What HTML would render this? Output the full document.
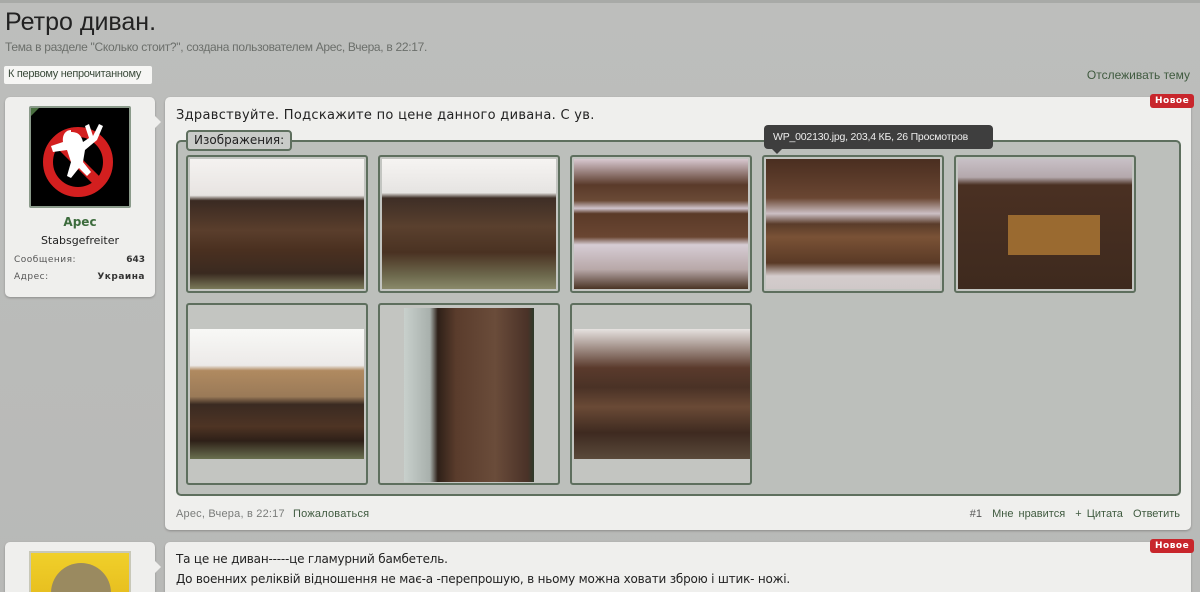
<!DOCTYPE html>
<html><head><meta charset="utf-8">
<style>
*{margin:0;padding:0;box-sizing:border-box}
html,body{width:1200px;height:592px;overflow:hidden}
body{background:linear-gradient(#bdbebc,#b8b9b7);font-family:"DejaVu Sans","Liberation Sans",sans-serif;position:relative}
.a{position:absolute}
h1{position:absolute;left:5px;top:8px;font:400 25px "Liberation Sans",sans-serif;color:#222}
.sub{left:5px;top:40px;font:12px "Liberation Sans",sans-serif;color:#6b6f6b;letter-spacing:-0.3px}
.btn{left:4px;top:66px;width:148px;height:18px;background:#f6f6f4;border-radius:2px;font:11px "Liberation Sans",sans-serif;color:#3a4a3a;padding:2px 4px;letter-spacing:-0.3px}
.watch{right:10px;top:68px;font:12px "Liberation Sans",sans-serif;color:#3f5a3f}
.panel{background:#efefed;border-radius:5px;box-shadow:0 1px 2px rgba(0,0,0,.25)}
.new{background:#c8262c;color:#fff;font:bold 9px "DejaVu Sans",sans-serif;padding:2px 5px;border-radius:3px;letter-spacing:.5px}
.tile{position:absolute;width:182px;height:138px;background:#c3c5c1;border:2px solid #5e6f5e;border-radius:3px;overflow:hidden}
.t2{height:182px}
.ph{position:absolute}
</style></head><body>
<div class="a" style="left:0;top:0;width:1200px;height:3px;background:#a8aaa7"></div>
<h1>Ретро диван.</h1>
<div class="a sub">Тема в разделе "Сколько стоит?", создана пользователем Арес, Вчера, в 22:17.</div>
<div class="a btn">К первому непрочитанному</div>
<div class="a watch">Отслеживать тему</div>

<div class="a panel" style="left:5px;top:97px;width:150px;height:200px"></div>
<div class="a" style="left:152px;top:113px;width:0;height:0;border:9px solid transparent;border-left-color:#efefed"></div>
<div class="a" style="left:29px;top:106px;width:102px;height:102px;background:#000;border:2px solid #8a9a8a;border-radius:2px;overflow:hidden">
<svg width="98" height="98" viewBox="0 0 98 98"><circle cx="47" cy="54" r="30" fill="none" stroke="#d31f1f" stroke-width="10"/><line x1="26" y1="33" x2="68" y2="75" stroke="#d31f1f" stroke-width="10"/><path d="M40 22c-6 0-9 6-8 12l-12 4 2 6 14-2 4 12-4 14 4 2 8-10 8 8 4-4-8-10 2-12 12-10 6-14-4-2-6 12-4-12-4 2 4 12-6 4c-2-8-6-10-12-10z" fill="#fff"/></svg>
<div class="a" style="left:-2px;top:-2px;width:0;height:0;border:6px solid #4a7040;border-right-color:transparent;border-bottom-color:transparent"></div>
</div>
<div class="a" style="left:5px;top:215px;width:150px;text-align:center;font:bold 12px 'DejaVu Sans',sans-serif;color:#3c6b3c">Арес</div>
<div class="a" style="left:5px;top:234px;width:150px;text-align:center;font:11px 'DejaVu Sans',sans-serif;color:#222">Stabsgefreiter</div>
<div class="a" style="left:14px;top:255px;font:9px 'DejaVu Sans',sans-serif;color:#555;letter-spacing:.5px">Сообщения:</div>
<div class="a" style="right:1055px;top:255px;font:bold 9px 'DejaVu Sans',sans-serif;color:#333">643</div>
<div class="a" style="left:14px;top:272px;font:9px 'DejaVu Sans',sans-serif;color:#555;letter-spacing:.5px">Адрес:</div>
<div class="a" style="right:1055px;top:272px;font:bold 9px 'DejaVu Sans',sans-serif;color:#333;letter-spacing:.5px">Украина</div>

<div class="a panel" style="left:165px;top:97px;width:1026px;height:433px"></div>
<div class="a new" style="left:1150px;top:94px">Новое</div>
<div class="a" style="left:176px;top:108px;font:13px 'DejaVu Sans',sans-serif;color:#222;letter-spacing:.3px">Здравствуйте. Подскажите по цене данного дивана. С ув.</div>
<div class="a" style="left:176px;top:140px;width:1005px;height:356px;background:#bcbfbb;border:2px solid #5e6f5e;border-radius:5px"></div>
<div class="a" style="left:186px;top:130px;height:21px;padding:1px 6px;background:#c9cbc8;border:2px solid #5e6f5e;border-radius:4px;font:12px 'DejaVu Sans',sans-serif;color:#222">Изображения:</div>

<div class="tile" style="left:186px;top:155px"><div class="ph" style="left:2px;top:2px;width:174px;height:130px;background:linear-gradient(#f4f2f0 0,#e8e4e2 28%,#3a2a22 32%,#5a3e2c 55%,#4a3020 70%,#3a2a20 88%,#7a7a5a 100%)"></div></div>
<div class="tile" style="left:378px;top:155px"><div class="ph" style="left:2px;top:2px;width:174px;height:130px;background:linear-gradient(#f6f4f2 0,#e6e4e2 26%,#3e2e26 30%,#5a402e 52%,#4a3222 72%,#6e6a4e 90%,#8a8a6a 100%)"></div></div>
<div class="tile" style="left:570px;top:155px"><div class="ph" style="left:2px;top:2px;width:174px;height:130px;background:linear-gradient(#d8c8d0 0,#5a3a2a 20%,#6a4a36 32%,#d0c4cc 38%,#5a3a28 42%,#6a4632 60%,#d6ccd4 66%,#b8a8a8 85%,#4a3424 100%)"></div></div>
<div class="tile" style="left:762px;top:155px"><div class="ph" style="left:2px;top:2px;width:174px;height:130px;background:linear-gradient(#4a2e20 0,#6a4632 30%,#ccbfc4 42%,#5a3c2a 50%,#7a5236 60%,#5a3a26 80%,#d4cccc 90%,#cfc8c8 100%)"></div></div>
<div class="tile" style="left:954px;top:155px"><div class="ph" style="left:2px;top:2px;width:174px;height:130px;background:linear-gradient(#c8c0c6 0,#b4a8ac 14%,#4a3022 20%,#3e2a1e 100%)"></div><div class="ph" style="left:52px;top:58px;width:92px;height:40px;background:#9a6a30"></div></div>

<div class="tile t2" style="left:186px;top:303px"><div class="ph" style="left:2px;top:24px;width:174px;height:130px;background:linear-gradient(#f8f8f6 0,#eceae8 28%,#b08a60 32%,#9a7a58 52%,#3a2a22 58%,#4e3424 75%,#2e2018 86%,#6a7050 100%)"></div></div>
<div class="tile t2" style="left:378px;top:303px"><div class="ph" style="left:24px;top:3px;width:130px;height:174px;background:linear-gradient(90deg,#c8d0cc 0,#a8b0ac 20%,#2e2018 26%,#5a3c2c 40%,#6a4c3a 70%,#4a3228 95%,#2e3a2a 100%)"></div></div>
<div class="tile t2" style="left:570px;top:303px"><div class="ph" style="left:2px;top:24px;width:176px;height:130px;background:linear-gradient(180deg,#e6e2e0 0,#5a3a2c 30%,#4a3226 45%,#6a4a36 60%,#3e2a20 80%,#5a4a3a 100%)"></div></div>

<div class="a" style="left:764px;top:125px;width:229px;height:24px;background:#3e3e3e;border-radius:4px;color:#eee;font:10.5px 'Liberation Sans',sans-serif;padding:6px 9px;letter-spacing:-0.2px">WP_002130.jpg, 203,4 КБ, 26 Просмотров</div>
<div class="a" style="left:772px;top:149px;width:0;height:0;border:5px solid transparent;border-top-color:#3e3e3e"></div>

<div class="a" style="left:176px;top:508px;font:11px 'Liberation Sans',sans-serif;color:#7a7c7a;letter-spacing:.2px">Арес, Вчера, в 22:17 <span style="color:#3f5a3f;margin-left:5px">Пожаловаться</span></div>
<div class="a" style="right:20px;top:508px;font:11px 'Liberation Sans',sans-serif;color:#3f5a3f;word-spacing:2px"><span style="color:#555">#1</span>&nbsp; Мне нравится &nbsp;+ Цитата &nbsp;Ответить</div>

<div class="a panel" style="left:5px;top:542px;width:150px;height:50px;border-radius:5px 5px 0 0"></div>
<div class="a" style="left:152px;top:558px;width:0;height:0;border:9px solid transparent;border-left-color:#efefed"></div>
<div class="a" style="left:29px;top:551px;width:102px;height:41px;background:linear-gradient(#f0d02a,#e8c020);border:2px solid #c8c8b8;border-bottom:0;overflow:hidden"><div class="a" style="left:20px;top:10px;width:60px;height:60px;border-radius:50%;background:#9a8a60"></div></div>
<div class="a panel" style="left:165px;top:542px;width:1026px;height:50px;border-radius:5px 5px 0 0"></div>
<div class="a new" style="left:1150px;top:539px">Новое</div>
<div class="a" style="left:176px;top:552px;font:12px 'DejaVu Sans',sans-serif;color:#222;letter-spacing:-0.2px">Та це не диван-----це гламурний бамбетель.</div>
<div class="a" style="left:176px;top:572px;font:12px 'DejaVu Sans',sans-serif;color:#222;letter-spacing:-0.2px">До военних реліквій відношення не має-а -перепрошую, в ньому можна ховати зброю і штик- ножі.</div>
</body></html>
